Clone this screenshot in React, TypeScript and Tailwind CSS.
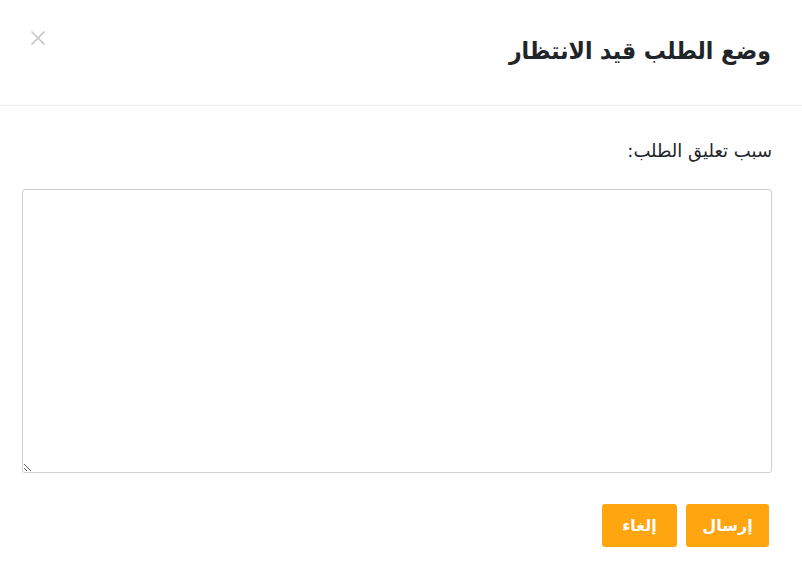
export default function App() {
  return (
    <div dir="rtl" className="w-[802px] h-[582px] bg-white font-['DejaVu_Sans',sans-serif] text-[#212529]">
      <div className="h-[106px] border-b border-[#ececec] flex items-center justify-between pr-[31px] pl-[28px]">
        <h2 className="text-[22px] font-bold leading-none -mt-[3px] scale-y-110">وضع الطلب قيد الانتظار</h2>
        <button className="self-start mt-[28px] text-[#c4c4c4]">
          <svg width="20" height="20" viewBox="0 0 20 20" fill="none" stroke="currentColor" strokeWidth="1.6">
            <path d="M3.5 3.5 L16.5 16.5 M16.5 3.5 L3.5 16.5" />
          </svg>
        </button>
      </div>
      <div className="pr-[30px] pl-[22px] pt-[36px]">
        <label className="block text-[18px] leading-none">سبب تعليق الطلب:</label>
        <textarea className="block mt-[29px] w-[750px] h-[284px] border border-[#cfcfcf] rounded-[3px] outline-none resize" />
        <div className="flex gap-[9px] mt-[31px] pr-[3px]">
          <button className="w-[83px] h-[43px] rounded-[3px] bg-[#ffa50f] text-white font-bold text-[16px]">إرسال</button>
          <button className="w-[75px] h-[43px] rounded-[3px] bg-[#ffa50f] text-white font-bold text-[16px]">إلغاء</button>
        </div>
      </div>
    </div>
  );
}
